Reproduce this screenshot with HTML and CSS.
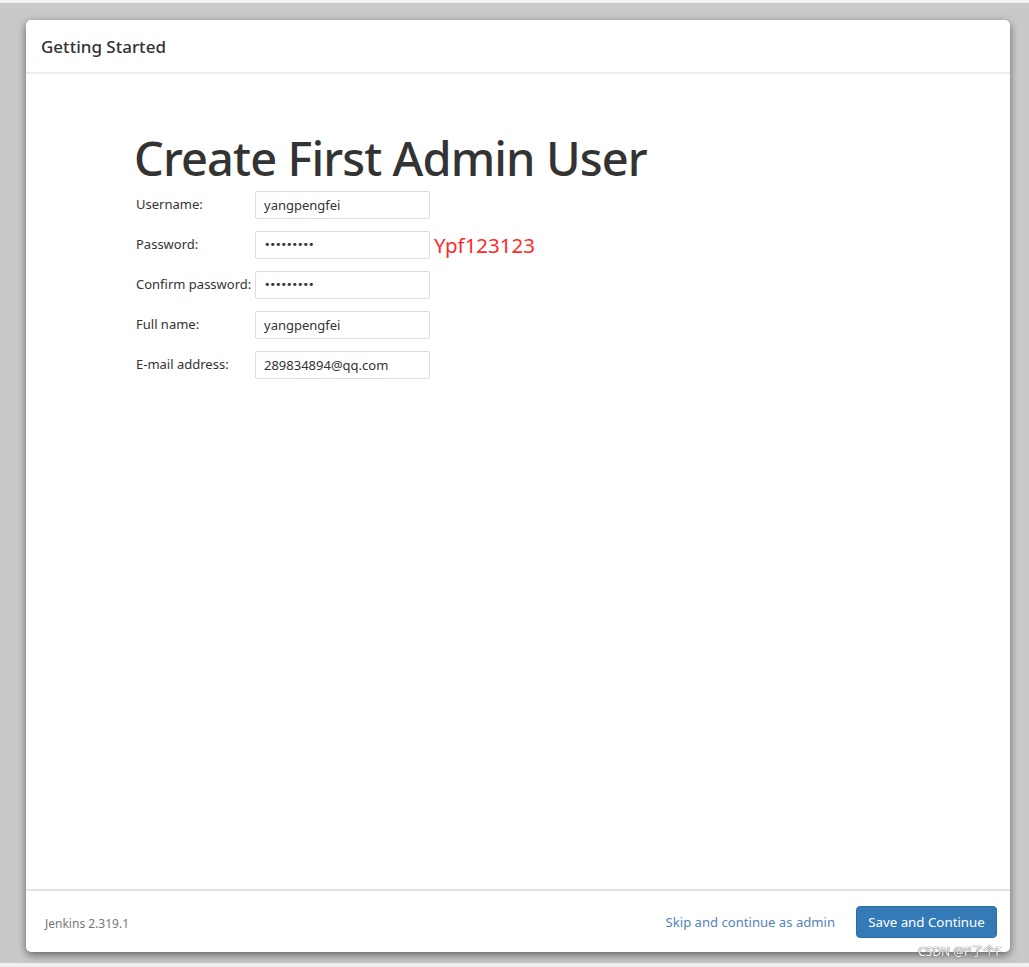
FILE: index.html
```html
<!DOCTYPE html>
<html>
<head>
<meta charset="utf-8">
<link rel="stylesheet" href="styles.css">
</head>
<body>
<div class="strip-top"></div>
<div class="stage">
  <div class="dialog">
    <div class="dlg-header">Getting Started</div>
    <div class="dlg-body">
      <h1 class="title">Create First Admin User</h1>
      <div class="form">
        <label class="lbl">Username:</label>
        <div class="field"><div class="input">yangpengfei</div></div>
        <label class="lbl">Password:</label>
        <div class="field"><div class="input dots">•••••••••</div><span class="note">Ypf123123</span></div>
        <label class="lbl">Confirm password:</label>
        <div class="field"><div class="input dots">•••••••••</div></div>
        <label class="lbl">Full name:</label>
        <div class="field"><div class="input">yangpengfei</div></div>
        <label class="lbl">E-mail address:</label>
        <div class="field"><div class="input">289834894@qq.com</div></div>
      </div>
    </div>
    <div class="dlg-footer">
      <span class="version">Jenkins 2.319.1</span>
      <div class="actions">
        <a class="skip">Skip and continue as admin</a>
        <button class="btn">Save and Continue</button>
      </div>
    </div>
  </div>
  <div class="watermark">CSDN @P了个F</div>
</div>
<div class="strip-bottom"></div>
</body>
</html>
```
FILE: styles.css
```css
html, body {
  margin: 0;
  padding: 0;
}
body {
  width: 1029px;
  height: 967px;
  overflow: hidden;
  background: #f0f0f0;
  font-family: "Noto Sans", "Open Sans", sans-serif;
  color: #333;
}
.strip-top {
  height: 3px;
  background: #f2f2f2;
}
.stage {
  position: relative;
  height: 960px;
  box-sizing: border-box;
  padding: 17px 0 0 26px;
  background: #c9c9c9;
}
.dialog {
  width: 984px;
  height: 932px;
  background: #fff;
  border-radius: 5px;
  box-shadow: 0 3px 9px rgba(0,0,0,0.5);
  display: flex;
  flex-direction: column;
}
.dlg-header {
  height: 52px;
  border-bottom: 2px solid #ececec;
  box-sizing: content-box;
  padding: 0 0 0 15px;
  display: flex;
  align-items: center;
  font-size: 17px;
  font-weight: 500;
  color: #333;
}
.dlg-body {
  flex: 1;
  padding: 57px 0 0 108px;
}
.title {
  margin: -3px 0 3px 0;
  font-size: 47px;
  font-weight: 500;
  line-height: 60px;
  color: #333;
  letter-spacing: -0.9px;
}
.form {
  display: grid;
  grid-template-columns: 119px auto;
  grid-auto-rows: 28px;
  row-gap: 12px;
  margin-left: 2px;
}
.lbl {
  font-size: 13px;
  color: #333;
  line-height: 28px;
  margin-top: -1px;
  white-space: nowrap;
}
.field {
  display: flex;
  align-items: center;
  height: 28px;
}
.input {
  width: 175px;
  height: 28px;
  box-sizing: border-box;
  border: 1px solid #ddd;
  border-radius: 2px;
  padding: 0 8px;
  font-size: 13px;
  line-height: 26px;
  color: #333;
}
.dots {
  font-size: 11px;
  letter-spacing: -1px;
  font-family: "DejaVu Sans", sans-serif;
}
.note {
  margin-left: 4px;
  color: #ff2a2a;
  font-size: 20.5px;
  line-height: 28px;
}
.dlg-footer {
  height: 61px;
  border-top: 2px solid #e3e3e3;
  display: flex;
  align-items: center;
  justify-content: space-between;
  padding: 0 13px 0 19px;
}
.version {
  font-size: 12px;
  color: #777;
  margin-top: 3px;
}
.actions {
  display: flex;
  align-items: center;
}
.skip {
  font-size: 13.1px;
  color: #5583bb;
  margin-right: 21px;
}
.btn {
  width: 141px;
  height: 32px;
  background: #337ab7;
  color: #fff;
  border: 1px solid #2e6da4;
  border-radius: 4px;
  font-family: "Noto Sans", "Open Sans", sans-serif;
  font-size: 13.3px;
  padding: 0;
}
.watermark {
  position: absolute;
  left: 918px;
  top: 939px;
  font-size: 12px;
  color: #fff;
  font-family: "Noto Sans", "Noto Sans CJK SC", sans-serif;
  text-shadow: 0 0 1px #555, 0 0 1px #555;
}
.strip-bottom {
  height: 4px;
  background: #f0f0f0;
}
```
